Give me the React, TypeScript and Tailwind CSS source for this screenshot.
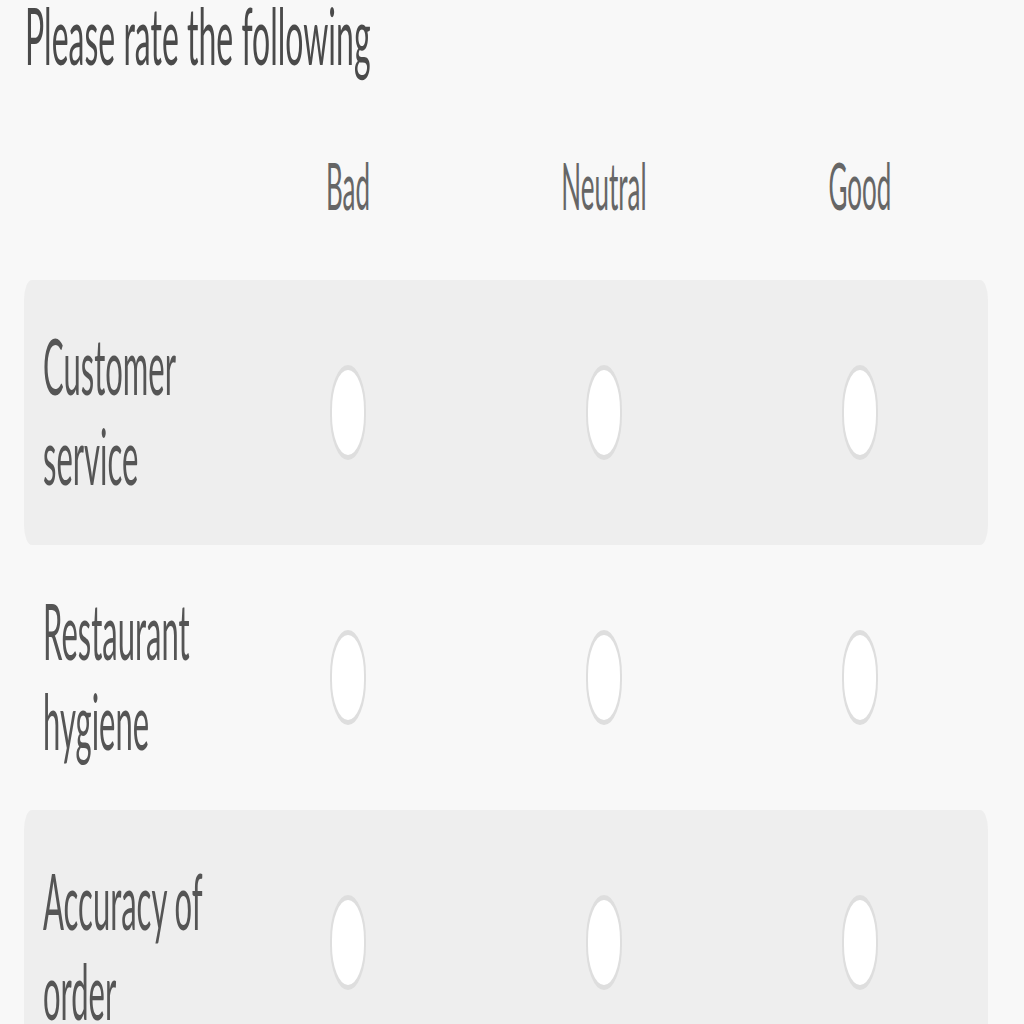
import React from "react";

const cols = ["Bad", "Neutral", "Good"];
const rows = [
  { label: ["Customer", "service"], shaded: true },
  { label: ["Restaurant", "hygiene"], shaded: false },
  { label: ["Accuracy of", "order"], shaded: true },
];

function Radio() {
  return (
    <div className="w-[18px] h-[19px] rounded-full bg-white border border-[#dedede]" />
  );
}

export default function App() {
  return (
    <div className="w-[1024px] h-[1024px] overflow-hidden bg-[#f8f8f8]">
      <div
        className="w-[512px] origin-top-left scale-x-200 scale-y-500 text-[#555]"
        style={{ fontFamily: "Lato, 'Noto Sans', sans-serif" }}
      >
        <div className="pl-[12.5px] text-[16px] leading-[14px] text-[#4a4a4a]">
          Please rate the following
        </div>
        <div className="ml-[11.5px] w-[482.5px] mt-[16px] flex text-[13px] leading-[15.6px] text-[#666]">
          <div className="w-[98.5px]" />
          {cols.map((c) => (
            <div key={c} className="w-[128px] text-center">
              {c}
            </div>
          ))}
        </div>
        <div className="ml-[11.5px] w-[482.5px] mt-[10px] flex flex-col">
          {rows.map((r, i) => (
            <div
              key={i}
              className={`flex h-[53.2px] items-center rounded-[4px] ${
                r.shaded ? "bg-[#eeeeee]" : ""
              }`}
            >
              <div className="w-[98.5px] pl-[10px] text-[15.5px] leading-[18px] text-[#555]">
                <div>{r.label[0]}</div>
                <div>{r.label[1]}</div>
              </div>
              {cols.map((c) => (
                <div key={c} className="w-[128px] flex justify-center">
                  <Radio />
                </div>
              ))}
            </div>
          ))}
        </div>
      </div>
    </div>
  );
}
